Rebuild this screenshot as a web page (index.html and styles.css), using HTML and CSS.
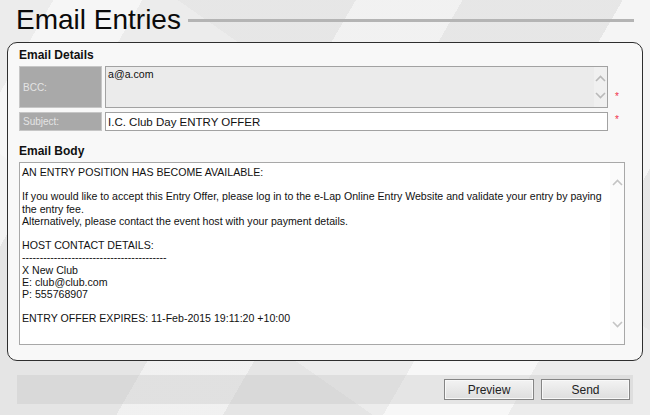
FILE: index.html
```html
<!DOCTYPE html>
<html lang="en">
<head>
  <meta charset="UTF-8">
  <title>Email Entries</title>
  <link rel="stylesheet" href="styles.css">
</head>
<body>
  <div class="page">
    <div class="title-row">
      <h1>Email Entries</h1>
      <div class="title-line"></div>
    </div>

    <div class="panel">
      <h2>Email Details</h2>

      <!-- BCC -->
      <div class="row row-bcc">
        <label class="label" for="bcc">BCC:</label>
        <div class="field field-bcc">
          <textarea id="bcc" class="field-text">a@a.com</textarea>
          <div class="scroll scroll-small">
            <svg width="11" height="7" viewBox="0 0 11 7"><path d="M1 6 L5.5 1.5 L10 6" fill="none" stroke="#b9b9b9" stroke-width="1.6"/></svg>
            <svg width="11" height="7" viewBox="0 0 11 7"><path d="M1 1 L5.5 5.5 L10 1" fill="none" stroke="#b9b9b9" stroke-width="1.6"/></svg>
          </div>
        </div>
        <span class="required">*</span>
      </div>

      <!-- Subject -->
      <div class="row row-subject">
        <label class="label" for="subject">Subject:</label>
        <input type="text" id="subject" class="field field-subject" value="I.C. Club Day ENTRY OFFER">
        <span class="required">*</span>
      </div>

      <h2 class="body-heading">Email Body</h2>
      <div class="field field-body">
        <textarea class="field-text body-text">AN ENTRY POSITION HAS BECOME AVAILABLE:

If you would like to accept this Entry Offer, please log in to the e-Lap Online Entry Website and validate your entry by paying the entry fee.
Alternatively, please contact the event host with your payment details.

HOST CONTACT DETAILS:
-----------------------------------------
X New Club
E: club@club.com
P: 555768907

ENTRY OFFER EXPIRES: 11-Feb-2015 19:11:20 +10:00</textarea>
        <div class="scroll scroll-large">
          <svg width="11" height="7" viewBox="0 0 11 7"><path d="M1 6 L5.5 1.5 L10 6" fill="none" stroke="#c4c4c4" stroke-width="1.6"/></svg>
          <svg width="11" height="7" viewBox="0 0 11 7"><path d="M1 1 L5.5 5.5 L10 1" fill="none" stroke="#c4c4c4" stroke-width="1.6"/></svg>
        </div>
      </div>
    </div>

    <div class="actions">
      <button type="button" class="btn btn-preview">Preview</button>
      <button type="button" class="btn btn-send">Send</button>
    </div>
  </div>
</body>
</html>
```

FILE: styles.css
```css
body {
  margin: 0;
  font-family: "Liberation Sans", Arial, sans-serif;
  color: #111;
  background-color: #ececec;
  background-image:
    linear-gradient(120deg, transparent 0 6%, rgba(255,255,255,0.55) 6% 16%, transparent 16% 40%, rgba(255,255,255,0.45) 40% 52%, transparent 52% 70%, rgba(255,255,255,0.6) 70% 84%, transparent 84%),
    linear-gradient(35deg, rgba(0,0,0,0.03) 0 30%, transparent 30% 62%, rgba(0,0,0,0.025) 62%);
  height: 415px;
  overflow: hidden;
}

.page {
  padding: 0 7px;
}

.title-row {
  display: flex;
  align-items: center;
  padding: 6px 0 0 9px;
}

h1 {
  margin: 0;
  font-size: 28px;
  line-height: 28px;
  font-weight: normal;
  color: #0a0a0a;
}

.title-line {
  flex: 1;
  height: 3px;
  margin: 0 9px 0 7px;
  background: #b4b4b4;
}

.panel {
  margin-top: 8px;
  border: 1px solid #2e2e2e;
  border-radius: 10px;
  background: #f8f8f8;
  padding: 5px 16px 15px 11px;
}

h2 {
  margin: 0 0 4px;
  font-size: 12px;
  line-height: 14px;
  font-weight: bold;
  color: #111;
}

.body-heading {
  margin: 13px 0 4px;
}

.row {
  display: flex;
  gap: 3px;
}

.row-bcc {
  height: 42px;
  margin-bottom: 4px;
}

.row-subject {
  height: 19px;
}

.label {
  width: 83px;
  box-sizing: border-box;
  display: flex;
  align-items: center;
  padding-left: 3px;
  background: #a9a9a9;
  border: 1px solid #c6c6c6;
  color: #e4e4e4;
  font-size: 10px;
}

.field {
  box-sizing: border-box;
  border: 1px solid #a2a2a2;
  font-family: inherit;
  color: #111;
}

.field-bcc {
  display: flex;
  width: 503px;
  background: #ebebeb;
}

.field-text {
  flex: 1;
  border: none;
  outline: none;
  resize: none;
  overflow: hidden;
  background: transparent;
  font-family: inherit;
  font-size: 10.6px;
  line-height: 12.2px;
  color: #111;
  padding: 1px 2px;
  margin: 0;
}

.scroll {
  display: flex;
  flex-direction: column;
  justify-content: space-between;
  align-items: center;
}

.scroll-small {
  width: 13px;
  background: #f0f0f0;
  padding: 8px 0 8px;
}

.field-subject {
  width: 503px;
  height: 19px;
  padding: 0 2px;
  background: #fff;
  font-size: 11.5px;
  outline: none;
}

.required {
  align-self: flex-end;
  margin: 0 0 6px 4px;
  color: #f0304a;
  font-size: 10px;
  line-height: 10px;
}

.field-body {
  display: flex;
  width: 606px;
  height: 183px;
  background: #fff;
  border-color: #a8a8a8;
}

.body-text {
  padding: 3px 2px;
}

.scroll-large {
  width: 14px;
  background: #fbfbfb;
  padding: 16px 0 16px;
}

.actions {
  display: flex;
  justify-content: flex-end;
  align-items: center;
  gap: 7px;
  height: 29px;
  margin: 14px 10px 0;
  padding-right: 3px;
  background: rgba(190, 190, 190, 0.3);
}

.btn {
  width: 90px;
  height: 21px;
  padding: 0;
  border: 1px solid #858585;
  box-shadow: inset 0 0 0 1px #f8f8f8;
  background: linear-gradient(#f3f3f3, #dedede);
  font-family: inherit;
  font-size: 12px;
  color: #222;
  cursor: pointer;
}

.btn-send {
  width: 89px;
}
```
